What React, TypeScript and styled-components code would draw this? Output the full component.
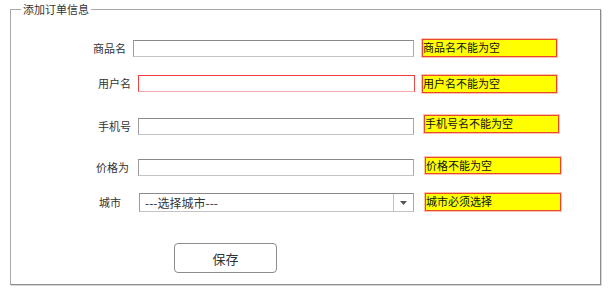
import React from "react";
import styled, { createGlobalStyle } from "styled-components";

const Global = createGlobalStyle`
  html, body { margin: 0; padding: 0; background: #ffffff; }
  body { font-family: "Noto Sans CJK SC", "Noto Sans", sans-serif; font-size: 11px; color: #333; }
  * { box-sizing: border-box; }
`;

const Page = styled.div`
  width: 613px;
  height: 300px;
  padding: 1px 0 0 10px;
`;

const Frame = styled.fieldset`
  margin: 0;
  padding: 0;
  width: 591px;
  height: 284px;
  border: 1px solid #a8a8a8;
  border-right-color: #8c8c8c;
  border-bottom-color: #8c8c8c;
  box-shadow: 1px 1px 0 #d8d8d8;
  display: flex;
  flex-direction: column;
  align-items: flex-start;
`;

const Title = styled.legend`
  margin-left: 10px;
  padding: 0 2px;
  font-size: 11px;
  line-height: 16px;
  color: #333;
`;

const Row = styled.div<{ $mt: number; $ml: number }>`
  display: flex;
  align-items: flex-start;
  margin-top: ${(p) => p.$mt}px;
  margin-left: ${(p) => p.$ml}px;
`;

const Label = styled.span<{ $mt: number; $h: number; $gap: number }>`
  margin-top: ${(p) => p.$mt}px;
  margin-right: ${(p) => p.$gap}px;
  height: ${(p) => p.$h}px;
  line-height: ${(p) => p.$h}px;
  font-size: 11px;
  color: #333;
  white-space: nowrap;
`;

const TextInput = styled.input<{ $w: number; $h: number; $mt: number; $invalid?: boolean }>`
  display: block;
  margin: ${(p) => p.$mt}px 0 0 0;
  padding: 0 3px;
  width: ${(p) => p.$w}px;
  height: ${(p) => p.$h}px;
  font: inherit;
  background: #fff;
  outline: none;
  border: 1px solid;
  border-color: ${(p) =>
    p.$invalid ? "#f03c3c #f04848 #f8a8a8 #f04040" : "#8a8a8a #a8a8a8 #c4c4c4 #9c9c9c"};
`;

const Select = styled.div<{ $w: number; $h: number; $mt: number }>`
  display: flex;
  align-items: stretch;
  margin-top: ${(p) => p.$mt}px;
  width: ${(p) => p.$w}px;
  height: ${(p) => p.$h}px;
  border: 1px solid;
  border-color: #8a8a8a #a8a8a8 #c4c4c4 #9c9c9c;
  background: #fff;
`;

const SelectText = styled.span`
  flex: 1;
  padding-left: 5px;
  line-height: 17px;
  font-size: 12px;
  color: #333;
  white-space: nowrap;
`;

const SelectArrow = styled.span`
  width: 20px;
  border-left: 1px solid #c0c0c0;
  display: flex;
  align-items: center;
  justify-content: center;
`;

const ErrorBox = styled.div<{ $w: number; $h: number; $mt: number; $gap: number }>`
  margin-top: ${(p) => p.$mt}px;
  margin-left: ${(p) => p.$gap}px;
  width: ${(p) => p.$w}px;
  height: ${(p) => p.$h}px;
  background: #ffff00;
  border: 1px solid #e8482c;
  box-shadow: 0 0 0 1px #ffc0b0;
  padding-left: 0;
  font-size: 11px;
  line-height: ${(p) => p.$h - 3}px;
  color: #111;
  white-space: nowrap;
  overflow: hidden;
`;

const SaveButton = styled.button`
  margin-top: 31px;
  margin-left: 163px;
  width: 103px;
  height: 30px;
  padding: 0;
  background: #fff;
  border: 1px solid #8c8c8c;
  border-radius: 4px;
  font: inherit;
  font-size: 13px;
  color: #333;
  cursor: pointer;
`;

type RowSpec = {
  label: string;
  mt: number;
  ml: number;
  gap: number;
  kind: "input" | "select";
  w: number;
  h: number;
  imt: number;
  invalid?: boolean;
  err: string;
  egap: number;
  ew: number;
  eh: number;
  emt: number;
};

const rows: RowSpec[] = [
  { label: "商品名", mt: 22, ml: 82, gap: 7, kind: "input", w: 281, h: 17, imt: 1, err: "商品名不能为空", egap: 8, ew: 135, eh: 18, emt: 0 },
  { label: "用户名", mt: 18, ml: 87, gap: 7, kind: "input", w: 277, h: 17, imt: 0, invalid: true, err: "用户名不能为空", egap: 7, ew: 135, eh: 18, emt: 0 },
  { label: "手机号", mt: 22, ml: 87, gap: 7, kind: "input", w: 276, h: 17, imt: 3, err: "手机号名不能为空", egap: 10, ew: 135, eh: 18, emt: 0 },
  { label: "价格为", mt: 22, ml: 85, gap: 9, kind: "input", w: 276, h: 17, imt: 2, err: "价格不能为空", egap: 11, ew: 136, eh: 17, emt: 0 },
  { label: "城市", mt: 17, ml: 88, gap: 18, kind: "select", w: 275, h: 19, imt: 0, err: "城市必须选择", egap: 11, ew: 136, eh: 18, emt: 0 },
];

export default function App() {
  return (
    <Page>
      <Global />
      <Frame>
        <Title>添加订单信息</Title>
        {rows.map((r) => (
          <Row key={r.label} $mt={r.mt} $ml={r.ml}>
            <Label $mt={r.imt} $h={r.h} $gap={r.gap}>
              {r.label}
            </Label>
            {r.kind === "input" ? (
              <TextInput $w={r.w} $h={r.h} $mt={r.imt} $invalid={r.invalid} />
            ) : (
              <Select $w={r.w} $h={r.h} $mt={r.imt}>
                <SelectText>---选择城市---</SelectText>
                <SelectArrow>
                  <svg width="7" height="4" viewBox="0 0 7 4">
                    <path d="M0 0 L7 0 L3.5 4 Z" fill="#555" />
                  </svg>
                </SelectArrow>
              </Select>
            )}
            <ErrorBox $w={r.ew} $h={r.eh} $mt={r.emt} $gap={r.egap}>
              {r.err}
            </ErrorBox>
          </Row>
        ))}
        <SaveButton>保存</SaveButton>
      </Frame>
    </Page>
  );
}
